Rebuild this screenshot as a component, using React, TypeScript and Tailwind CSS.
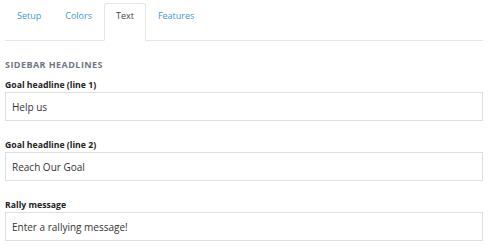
import { useState } from "react";

const tabs = ["Setup", "Colors", "Text", "Features"];

const fields = [
  { label: "Goal headline (line 1)", value: "Help us" },
  { label: "Goal headline (line 2)", value: "Reach Our Goal" },
  { label: "Rally message", value: "Enter a rallying message!" },
];

export default function App() {
  const [active, setActive] = useState("Text");

  return (
    <div className="min-h-screen bg-white pl-[5px] pr-[10px] pt-[3px] font-['Open_Sans',sans-serif]">
      <div className="flex h-[38px] items-stretch border-b border-[#e4e6e8]">
        {tabs.map((t) => (
          <button
            key={t}
            onClick={() => setActive(t)}
            className={
              t === active
                ? "mb-[-1px] flex items-start rounded-t-[3px] border border-b-white border-[#e4e6e8] bg-white px-[11px] pt-[5px] text-[9px] leading-[14px] text-[#444]"
                : "mb-[-1px] flex items-start border border-transparent px-[11px] pt-[5px] text-[9px] leading-[14px] text-[#3b9ad6]"
            }
          >
            {t}
          </button>
        ))}
      </div>

      <div className="mt-[18px] text-[9px] font-bold uppercase leading-[12px] tracking-[0.05em] text-[#6f7782]">
        Sidebar headlines
      </div>

      <div className="mt-[8px] flex flex-col gap-[18px]">
        {fields.map((f) => (
          <div key={f.label}>
            <div className="text-[8.7px] font-bold leading-[12px] text-[#222]">{f.label}</div>
            <input
              defaultValue={f.value}
              className="mt-[1px] block h-[29px] w-full border border-[#dcdfe3] px-[6px] text-[10px] text-[#333] outline-none"
            />
          </div>
        ))}
      </div>
    </div>
  );
}
